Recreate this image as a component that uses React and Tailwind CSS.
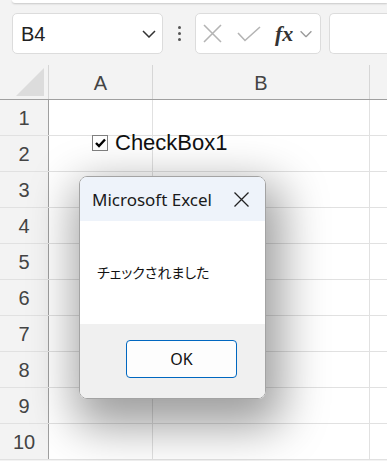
import React from 'react';

const rows = [1, 2, 3, 4, 5, 6, 7, 8, 9, 10];

const Chevron = ({ className }) => (
  <svg width="14" height="8" viewBox="0 0 14 8" className={className}>
    <path d="M1 1 L7 7 L13 1" fill="none" stroke="currentColor" strokeWidth="1.5" />
  </svg>
);

const FormulaBar = () => (
  <div className="flex items-center h-[41px] mt-[10px]">
    {/* Name box */}
    <div className="ml-[12px] w-[151px] h-full bg-white border border-[#dcdcdc] rounded-[5px] flex items-center justify-between pl-[8px] pr-[6px]">
      <span className="text-[20px] text-[#222]">B4</span>
      <Chevron className="text-[#333]" />
    </div>

    {/* More dots */}
    <div className="w-[32px] flex flex-col items-center gap-[3px]">
      <span className="w-[3px] h-[3px] rounded-full bg-[#555]" />
      <span className="w-[3px] h-[3px] rounded-full bg-[#555]" />
      <span className="w-[3px] h-[3px] rounded-full bg-[#555]" />
    </div>

    {/* Cancel / enter / fx */}
    <div className="w-[126px] h-full bg-white border border-[#dcdcdc] rounded-[5px] flex items-center pl-[7px]">
      <svg width="19" height="19" viewBox="0 0 19 19">
        <path d="M1 1 L18 18 M18 1 L1 18" stroke="#b4b4b4" strokeWidth="1.6" fill="none" />
      </svg>
      <svg width="24" height="16" viewBox="0 0 24 16" className="ml-[15px]">
        <path d="M1 7 L8 14.5 L23 1" stroke="#b4b4b4" strokeWidth="1.6" fill="none" />
      </svg>
      <span className="ml-[14px] text-[22px] leading-none italic font-bold text-[#333] font-['Liberation_Serif',serif]">
        fx
      </span>
      <Chevron className="ml-[6px] text-[#9a9a9a] scale-90" />
    </div>

    {/* Formula input */}
    <div className="ml-[8px] flex-1 h-full bg-white border border-[#dcdcdc] border-r-0 rounded-l-[5px]" />
  </div>
);

const HeaderRow = () => (
  <div className="flex h-[35px] mt-[11px] border-b border-[#9f9f9f]">
    <div className="w-[49px] shrink-0 border-r border-[#d6d6d6] flex items-end pl-[16px] pb-[3px]">
      <svg width="28" height="28" viewBox="0 0 28 28">
        <polygon points="28,0 28,28 0,28" fill="#dcdcdc" />
      </svg>
    </div>
    <div className="w-[104px] shrink-0 border-r border-[#d6d6d6] flex items-center justify-center text-[20px] text-[#444] pt-[2px]">
      A
    </div>
    <div className="w-[217px] shrink-0 border-r border-[#d6d6d6] flex items-center justify-center text-[20px] text-[#444] pt-[2px]">
      B
    </div>
    <div className="flex-1" />
  </div>
);

const SheetRow = ({ n }) => (
  <div className="flex h-[36px] border-b border-[#e1e1e1]">
    <div className="w-[49px] shrink-0 bg-[#f3f3f3] border-r border-[#9f9f9f] flex items-center justify-center text-[20px] text-[#444]">
      {n}
    </div>
    <div className="w-[104px] shrink-0 bg-white border-r border-[#e1e1e1]" />
    <div className="w-[217px] shrink-0 bg-white border-r border-[#e1e1e1]" />
    <div className="flex-1 bg-white" />
  </div>
);

const MessageBox = () => (
  <div className="absolute left-[79px] top-[176px] w-[187px] h-[223px] rounded-[8px] border border-[#a3a3a3] overflow-hidden flex flex-col shadow-[6px_18px_46px_10px_rgba(0,0,0,0.38)] font-['Noto_Sans','Noto_Sans_CJK_JP',sans-serif]">
    {/* Title bar */}
    <div className="h-[44px] bg-[#eef3fa] flex items-center justify-between pl-[12px] pr-[16px]">
      <span className="text-[17px] text-[#1a1a1a] pt-[1px]">Microsoft Excel</span>
      <svg width="15" height="15" viewBox="0 0 15 15">
        <path d="M0.5 0.5 L14.5 14.5 M14.5 0.5 L0.5 14.5" stroke="#222" strokeWidth="1.3" fill="none" />
      </svg>
    </div>

    {/* Body */}
    <div className="h-[103px] bg-white flex items-center pl-[17px]">
      <span className="text-[14px] text-[#111] font-['Noto_Sans_CJK_JP',sans-serif] [font-feature-settings:'palt']">
        チェックされました
      </span>
    </div>

    {/* Footer */}
    <div className="flex-1 bg-[#f0f0f0] pt-[16px] pl-[46px]">
      <button className="w-[111px] h-[38px] bg-[#fdfdfd] border border-[#0067c0] rounded-[4px] text-[16px] text-[#111]">
        OK
      </button>
    </div>
  </div>
);

export default function App() {
  return (
    <div className="relative w-[387px] h-[461px] overflow-hidden bg-[#f3f3f3] font-['Liberation_Sans',Arial,sans-serif]">
      {/* Ribbon edge */}
      <div className="ml-[12px] h-[3px] bg-white rounded-bl-[6px] shadow-[0_1px_2px_rgba(0,0,0,0.18)]" />

      <FormulaBar />
      <HeaderRow />

      <div>
        {rows.map((n) => (
          <SheetRow key={n} n={n} />
        ))}
      </div>

      {/* Form control: check box */}
      <div className="absolute left-[92px] top-[132px] flex items-center">
        <div className="w-[16px] h-[16px] bg-white border border-[#808080] flex items-center justify-center">
          <svg width="11" height="10" viewBox="0 0 11 10">
            <path d="M1 5 L4 8 L10 1.5" stroke="#000" strokeWidth="2.4" fill="none" />
          </svg>
        </div>
        <span className="ml-[7px] text-[22px] leading-none text-[#111]">CheckBox1</span>
      </div>

      <MessageBox />
    </div>
  );
}
